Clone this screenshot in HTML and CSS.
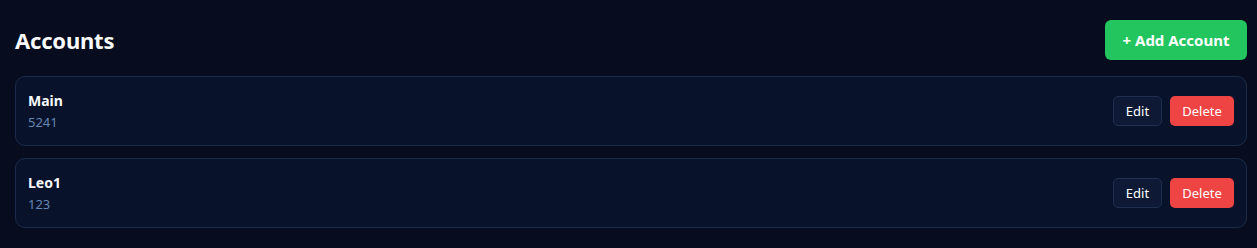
FILE: index.html
```html
<!DOCTYPE html>
<html lang="en">
<head>
<meta charset="utf-8">
<title>Accounts</title>
<link rel="stylesheet" href="styles.css">
</head>
<body>
<main class="page">
  <header class="header">
    <h1 class="title">Accounts</h1>
    <button class="btn-add">+ Add Account</button>
  </header>
  <ul class="list">
    <li class="card">
      <div class="info">
        <div class="name">Main</div>
        <div class="sub">5241</div>
      </div>
      <div class="actions">
        <button class="btn btn-edit">Edit</button>
        <button class="btn btn-delete">Delete</button>
      </div>
    </li>
    <li class="card">
      <div class="info">
        <div class="name">Leo1</div>
        <div class="sub">123</div>
      </div>
      <div class="actions">
        <button class="btn btn-edit">Edit</button>
        <button class="btn btn-delete">Delete</button>
      </div>
    </li>
  </ul>
</main>
</body>
</html>
```
FILE: styles.css
```css
* { box-sizing: border-box; }
html, body {
  margin: 0;
  height: 100%;
  background: #070c1f;
  color: #f1f5f9;
  font-family: "Noto Sans", "Open Sans", sans-serif;
}
.page {
  padding: 20px 10px 0 15px;
}
.header {
  display: flex;
  justify-content: space-between;
  align-items: center;
  height: 40px;
  margin-bottom: 16px;
}
.title {
  margin: 0;
  font-size: 22px;
  font-weight: 700;
  color: #f8fafc;
  letter-spacing: -0.2px;
}
.btn-add {
  height: 40px;
  width: 142px;
  border: none;
  border-radius: 6px;
  background: #22c55e;
  color: #ffffff;
  font-family: inherit;
  font-size: 15px;
  font-weight: 700;
  padding: 0;
}
.list {
  list-style: none;
  margin: 0;
  padding: 0;
  display: flex;
  flex-direction: column;
  gap: 12px;
}
.card {
  display: flex;
  justify-content: space-between;
  align-items: center;
  height: 70px;
  padding: 0 12px 0 12px;
  background: #08122a;
  border: 1px solid #1b2c4a;
  border-radius: 10px;
}
.name {
  font-size: 14px;
  font-weight: 700;
  color: #f8fafc;
  line-height: 18px;
}
.sub {
  margin-top: 3px;
  font-size: 13px;
  color: #6487b3;
  line-height: 18px;
}
.actions {
  display: flex;
  gap: 8px;
}
.btn {
  height: 30px;
  border-radius: 5px;
  font-family: inherit;
  font-size: 13px;
  color: #ffffff;
  padding: 0;
}
.btn-edit {
  width: 49px;
  background: #0e1a35;
  border: 1px solid #1e2e4f;
}
.btn-delete {
  width: 64px;
  background: #ef4444;
  border: none;
}
```
